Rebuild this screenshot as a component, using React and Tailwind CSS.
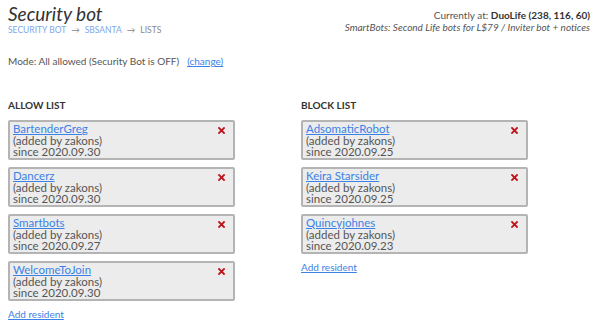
import React from 'react';

const allowList = [
  { name: 'BartenderGreg', by: 'zakons', since: '2020.09.30' },
  { name: 'Dancerz', by: 'zakons', since: '2020.09.30' },
  { name: 'Smartbots', by: 'zakons', since: '2020.09.27' },
  { name: 'WelcomeToJoin', by: 'zakons', since: '2020.09.30' },
];

const blockList = [
  { name: 'AdsomaticRobot', by: 'zakons', since: '2020.09.25' },
  { name: 'Keira Starsider', by: 'zakons', since: '2020.09.25' },
  { name: 'Quincyjohnes', by: 'zakons', since: '2020.09.23' },
];

const CloseIcon = () => (
  <svg width="7" height="7" viewBox="0 0 7 7">
    <path d="M1 1L6 6M6 1L1 6" stroke="#c0141b" strokeWidth="1.8" strokeLinecap="square" />
  </svg>
);

const Entry = ({ item }) => (
  <div className="relative w-[227px] h-[40px] border-2 border-[#b4b4b4] rounded-[2px] bg-[#ececec] px-[3px] pt-[1px] text-[11.5px] leading-[11.5px] text-[#555]">
    <a href="#" className="text-[#3b82e6] underline">{item.name}</a>
    <div>(added by {item.by})</div>
    <div>since {item.since}</div>
    <span className="absolute right-[8px] top-[5px]"><CloseIcon /></span>
  </div>
);

const ListColumn = ({ title, items }) => (
  <div>
    <h3 className="text-[10px] font-bold text-[#333] leading-[12px] mb-[9px]">{title}</h3>
    <div className="flex flex-col gap-[7px]">
      {items.map((item) => (
        <Entry key={item.name} item={item} />
      ))}
    </div>
    <a href="#" className="block mt-[7px] text-[10px] leading-[12px] text-[#3b82e6] underline">Add resident</a>
  </div>
);

export default function App() {
  return (
    <div className="w-[600px] h-[328px] bg-white px-2 pt-[3px] text-[#555] overflow-hidden" style={{ fontFamily: 'Lato, "Open Sans", sans-serif' }}>
      <div className="flex justify-between">
        <div>
          <h1 className="text-[19px] italic leading-[22px] text-[#333]">Security bot</h1>
          <div className="text-[8.5px] leading-[12px] uppercase mt-[-1px]">
            <a href="#" className="text-[#7ea7e8]">Security Bot</a>
            <span className="text-[#888] mx-[5px]">→</span>
            <a href="#" className="text-[#7ea7e8]">SBSanta</a>
            <span className="text-[#888] mx-[5px]">→</span>
            <span className="text-[#888]">Lists</span>
          </div>
        </div>
        <div className="text-right text-[10px] leading-[12px] pt-[6px] pr-[2px]">
          <div>Currently at: <b className="text-[#333]">DuoLife (238, 116, 60)</b></div>
          <div className="italic">SmartBots: Second Life bots for L$79 / Inviter bot + notices</div>
        </div>
      </div>
      <div className="mt-[19px] text-[10px] leading-[12px]">
        Mode: All allowed (Security Bot is OFF)
        <a href="#" className="ml-[8px] text-[#3b82e6] underline">(change)</a>
      </div>
      <div className="grid grid-cols-2 mt-[32px]">
        <ListColumn title="ALLOW LIST" items={allowList} />
        <div className="pl-[1px]">
          <ListColumn title="BLOCK LIST" items={blockList} />
        </div>
      </div>
    </div>
  );
}
